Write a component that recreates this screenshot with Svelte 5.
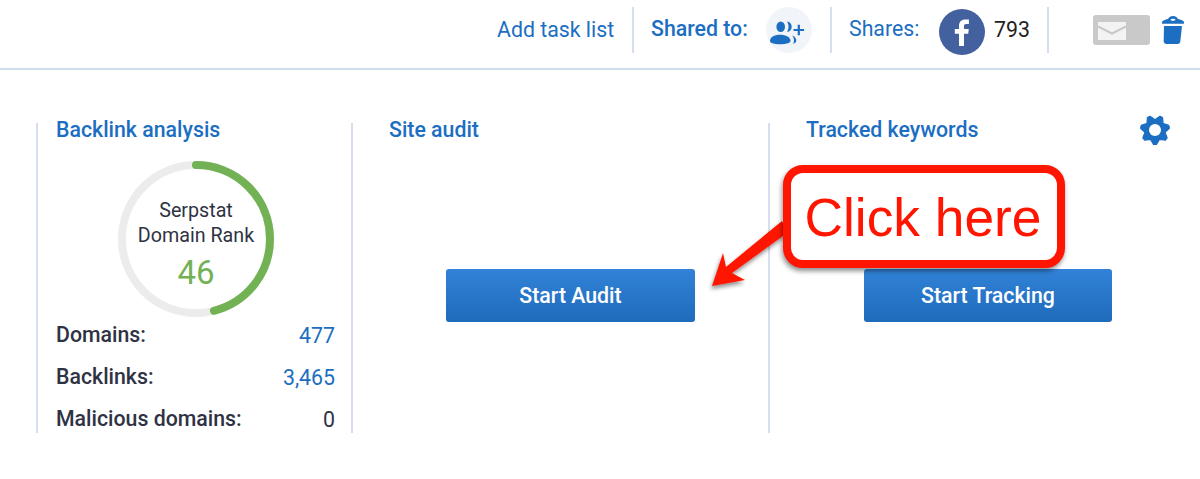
<script>
  const rows = [
    { label: 'Domains:', value: '477', link: true },
    { label: 'Backlinks:', value: '3,465', link: true },
    { label: 'Malicious domains:', value: '0', link: false }
  ];
  const C = 2 * Math.PI * 74;

  function gearPath() {
    const pts = [];
    const teeth = 7;
    for (let i = 0; i < teeth; i++) {
      const a = Math.PI / 2 + (i * 2 * Math.PI) / teeth;
      for (const [da, r] of [[-0.42, 10.5], [-0.1, 14.5], [0.1, 14.5], [0.42, 10.5]]) {
        pts.push(`${(Math.cos(a + da) * r).toFixed(2)} ${(Math.sin(a + da) * r).toFixed(2)}`);
      }
    }
    return 'M' + pts.join('L') + 'z';
  }
  const gear = gearPath();
</script>

<div class="page">
  <header class="top">
    <a class="addtask">Add task list</a>
    <span class="sep"></span>
    <span class="label l1">Shared to:</span>
    <span class="share-btn">
      <svg width="46" height="46" viewBox="0 0 46 46">
        <ellipse cx="14.700" cy="19.700" rx="4.300" ry="5.300" fill="#1b6ec2"/>
        <path d="M21 14.500c3 .3 4.700 2.600 4.700 5.300s-1.700 5-4.700 5.200c1-1.400 1.500-3.200 1.500-5.200s-.5-3.900-1.500-5.300z" fill="#1b6ec2"/>
        <path d="M4 34c0-3.700 4-6.200 10-6.200s10.500 2.500 10.500 6.200c0 2-4.500 3.200-10.500 3.200S4 36 4 34z" fill="#1b6ec2"/>
        <path d="M26 28.500c2.700.9 4.300 2.800 4.300 5 0 1.500-1.100 2.700-3.300 3.300.7-1 1-2.100 1-3.300 0-1.900-.7-3.700-2-5z" fill="#1b6ec2"/>
        <path d="M27.500 23h10.600M32.800 17.700v10.600" stroke="#1b6ec2" stroke-width="2.200" fill="none"/>
      </svg>
    </span>
    <span class="sep"></span>
    <span class="label l2">Shares:</span>
    <span class="fb">
      <svg width="46" height="46" viewBox="0 0 46 46">
        <circle cx="23" cy="23" r="23" fill="#43609f"/>
        <path d="M25 37V24.800h4.200l.6-4.700H25v-2.900c0-1.400.4-2.300 2.300-2.300h2.600V10.600c-.5-.1-2-.2-3.700-.2-3.700 0-6.200 2.200-6.200 6.400v3.300h-4.200v4.700H20V37z" fill="#fff"/>
      </svg>
    </span>
    <span class="count">793</span>
    <span class="sep"></span>
    <span class="mail">
      <svg width="28" height="18" viewBox="0 0 28 18">
        <rect width="28" height="18" fill="#f3f3f3"/>
        <path d="M0 4.500l14 7 14-7" fill="none" stroke="#c9c9c9" stroke-width="2.200"/>
      </svg>
    </span>
    <svg class="trash" width="24" height="30" viewBox="0 0 24 30">
      <path fill="#1b6ec2" fill-rule="evenodd" d="M12 1c-2.300 0-4 1.200-5 3C4.200 4.700 1.600 5.600 1 7c-.4.900 0 1.800 1 1.800h20c1 0 1.400-.9 1-1.800-.6-1.400-3.200-2.300-6-3-1-1.800-2.700-3-5-3zm0 2.800c1.100 0 2.100.5 2.800 1.300L12 6 9.200 5.100c.7-.8 1.700-1.300 2.800-1.300z"/>
      <path fill="#1b6ec2" d="M3 11h18l-1.700 15.500c-.2 1.600-1.200 2.500-2.800 2.500h-11c-1.600 0-2.600-.9-2.800-2.500z"/>
    </svg>
  </header>

  <main class="cols">
    <section class="col c1">
      <h2>Backlink analysis</h2>
      <div class="ring">
        <svg width="160" height="160" viewBox="0 0 160 160">
          <circle cx="80" cy="80" r="74" fill="none" stroke="#ececec" stroke-width="8"/>
          <circle cx="80" cy="80" r="74" fill="none" stroke="#72b255" stroke-width="8" stroke-linecap="round"
            stroke-dasharray={`${C * 0.46} ${C}`} transform="rotate(-90 80 80)"/>
        </svg>
        <div class="ring-text">
          <div class="rank">Serpstat<br />Domain Rank</div>
          <div class="score">46</div>
        </div>
      </div>
      <div class="rows">
        {#each rows as r}
          <div class="row">
            <span class="rl">{r.label}</span>
            <span class="rv" class:link={r.link}>{r.value}</span>
          </div>
        {/each}
      </div>
    </section>

    <section class="col c2">
      <h2>Site audit</h2>
      <button class="cta">Start Audit</button>
    </section>

    <section class="col c3">
      <div class="head3">
        <h2>Tracked keywords</h2>
        <svg class="gear" width="32" height="32" viewBox="-16 -16 32 32">
          <path d={gear} fill="#1b6ec2" stroke="#1b6ec2" stroke-width="1.200" stroke-linejoin="round"/>
          <circle r="6" fill="#fff"/>
        </svg>
      </div>
      <button class="cta">Start Tracking</button>
    </section>
  </main>

  <svg class="arrow" width="90" height="90" viewBox="0 0 90 90">
    <defs>
      <filter id="sh" x="-30%" y="-30%" width="160%" height="160%">
        <feDropShadow dx="-1" dy="3" stdDeviation="2" flood-color="#000" flood-opacity="0.45"/>
      </filter>
    </defs>
    <path filter="url(#sh)" fill="#ff1500" d="M76 6l5 12-55 40 13 7-33 6 11-33 3 14z"/>
  </svg>
  <div class="callout">Click here</div>
</div>

<style>
  :global(body) {
    margin: 0;
    background: #fff;
  }
  .page {
    position: relative;
    width: 1200px;
    height: 479px;
    overflow: hidden;
    font-family: Roboto, "Liberation Sans", sans-serif;
    color: #2f3243;
  }
  .top {
    height: 70px;
    box-sizing: border-box;
    border-bottom: 2px solid #d0dcee;
    display: flex;
    align-items: flex-start;
    padding: 7px 0 0 497px;
    font-size: 21.300px;
  }
  .addtask {
    margin-top: 10px;
    color: #1b6ec2;
    width: 135px;
  }
  .sep {
    width: 2px;
    height: 46px;
    background: #d5dff0;
    flex: none;
  }
  .label {
    margin-top: 9px;
    color: #1b6ec2;
    white-space: nowrap;
  }
  .l1 { margin-left: 17px; width: 115px; font-weight: 500; }
  .l2 { margin-left: 17px; width: 90px; }
  .share-btn {
    width: 46px;
    height: 46px;
    border-radius: 50%;
    background: #f1f4f9;
    flex: none;
    margin-right: 18px;
  }
  .share-btn svg { display: block; }
  .fb {
    width: 46px;
    height: 46px;
    margin-top: 2px;
    flex: none;
  }
  .count {
    margin: 10px 0 0 9px;
    width: 53px;
    color: #222;
  }
  .mail {
    margin: 8px 0 0 44px;
    width: 57px;
    height: 30px;
    background: #c9c9c9;
    border-radius: 3px;
    display: flex;
    padding: 7px 0 0 5px;
    box-sizing: border-box;
  }
  .trash { margin: 8px 0 0 11px; }

  .cols {
    display: grid;
    grid-template-columns: 315px 417px 400px;
    grid-template-rows: 310px;
    margin: 53px 0 0 36px;
  }
  .col {
    border-left: 2px solid #d5dff0;
    box-sizing: border-box;
    position: relative;
  }
  h2 {
    margin: -6px 0 0;
    height: 26px;
    font-size: 21.300px;
    line-height: 26px;
    font-weight: 500;
    color: #1b6ec2;
  }
  .c1 { padding: 0 16px 0 18px; }
  .c2 { padding-left: 36px; }
  .c3 { padding-left: 36px; }
  .head3 {
    display: flex;
    justify-content: space-between;
    align-items: flex-start;
    width: 365px;
    height: 19px;
  }
  .gear { margin-top: -9px; }
  .ring {
    position: relative;
    width: 160px;
    height: 160px;
    margin: 16px 0 0 60px;
  }
  .ring svg { display: block; }
  .ring-text {
    position: absolute;
    inset: 0;
    text-align: center;
    padding-top: 39px;
  }
  .rank {
    font-size: 19.700px;
    line-height: 25px;
  }
  .score {
    font-size: 33px;
    line-height: 38px;
    margin-top: 6px;
    color: #72b255;
  }
  .row {
    display: flex;
    justify-content: space-between;
    height: 42px;
    font-size: 21.300px;
    line-height: 26px;
    padding-top: 3px;
    box-sizing: border-box;
  }
  .rl { font-weight: 500; }
  .rv { margin-top: 1px; font-weight: 400; }
  .rv.link { color: #1b6ec2; }
  .cta {
    display: block;
    width: 249px;
    height: 53px;
    border: 0;
    border-radius: 3px;
    background: linear-gradient(#3182d8, #1f6bbb);
    color: #fff;
    font: 500 21.300px Roboto, sans-serif;
    cursor: pointer;
  }
  .c2 .cta { margin: 126px 0 0 57px; }
  .c3 .cta { margin: 127px 0 0 58px; width: 248px; }

  .callout {
    position: absolute;
    left: 783px;
    top: 165px;
    width: 282px;
    height: 103px;
    box-sizing: border-box;
    border: 8px solid #ff1500;
    border-radius: 20px;
    padding-right: 2px;
    background: #fff;
    box-shadow: -1px 3px 5px rgba(0, 0, 0, 0.45);
    color: #ff1500;
    font: 400 53.300px/89px "Liberation Sans", Arial, sans-serif;
    text-align: center;
    white-space: nowrap;
  }
  .arrow {
    position: absolute;
    left: 706px;
    top: 215px;
  }
</style>
